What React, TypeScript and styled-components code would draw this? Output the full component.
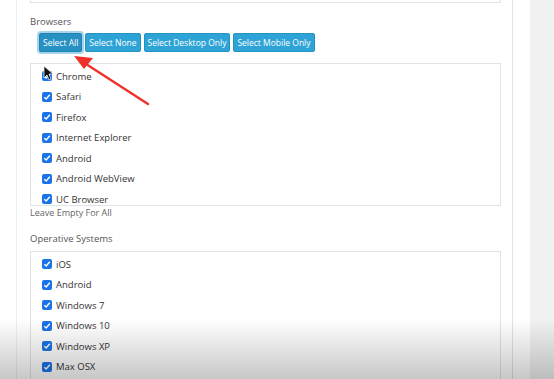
import React from 'react';
import styled, { createGlobalStyle } from 'styled-components';

const GlobalStyle = createGlobalStyle`
  html, body {
    margin: 0;
    padding: 0;
    background: #ffffff;
  }
  body {
    font-family: "Open Sans", "Liberation Sans", sans-serif;
  }
`;

const Page = styled.div`
  position: relative;
  display: flex;
  width: 554px;
  height: 379px;
  overflow: hidden;
  background: #ffffff;
`;

const Panel = styled.div`
  margin-left: 16px;
  width: 471px;
  padding: 0 11px 0 13px;
  border-left: 1px solid #eceff1;
  border-right: 1px solid #dde3e7;
  flex-shrink: 0;
`;

const Gutter = styled.div`
  width: 17px;
  flex-shrink: 0;
`;

const Backdrop = styled.div`
  flex: 1;
  background: #f1f1f1;
`;

const PrevBoxTail = styled.div`
  height: 2px;
  border: 1px solid #dde3e7;
  border-top: none;
`;

const Label = styled.div`
  font-size: 9.5px;
  color: #555;
  line-height: 14px;
  margin-top: 12px;
`;

const ButtonRow = styled.div`
  display: flex;
  gap: 3px;
  margin: 4px 0 0 9px;
`;

const Btn = styled.button<{ $active?: boolean }>`
  height: 19px;
  padding: 0 3px;
  border: 1px solid ${p => (p.$active ? '#1f84b3' : '#2592c4')};
  border-radius: 2px;
  background: ${p => (p.$active ? '#2791c2' : '#2ea3d6')};
  color: #ffffff;
  font-family: "Open Sans", "Liberation Sans", sans-serif;
  font-size: 8.5px;
  line-height: 17px;
  white-space: nowrap;
  box-shadow: ${p => (p.$active ? '0 0 0 2px rgba(60,160,210,0.45)' : 'none')};
  cursor: pointer;
`;

const ListBox = styled.div<{ $first?: boolean }>`
  margin-top: ${p => (p.$first ? 11 : 0)}px;
  height: ${p => (p.$first ? 143 : 140)}px;
  border: 1px solid #dde3e7;
  padding: 2px 0 0 11px;
  overflow: hidden;
  box-sizing: border-box;
`;

const Row = styled.div`
  display: flex;
  align-items: center;
  height: 20.5px;
  gap: 4px;
`;

const Box = styled.span`
  width: 10px;
  height: 10px;
  border-radius: 2px;
  background: #1a73e8;
  display: flex;
  align-items: center;
  justify-content: center;
  flex-shrink: 0;
`;

const ItemText = styled.span`
  font-size: 9.5px;
  color: #333;
`;

const Hint = styled.div`
  font-size: 9px;
  color: #666;
  line-height: 14px;
  margin-top: 0;
`;

const SectionLabel = styled(Label)`
  margin-top: 12px;
  margin-bottom: 5px;
`;

const Overlay = styled.svg`
  position: absolute;
  left: 0;
  top: 0;
  pointer-events: none;
`;

const Shade = styled.div`
  position: absolute;
  left: 0;
  right: 0;
  bottom: 0;
  height: 60px;
  background: linear-gradient(to bottom, rgba(0,0,0,0), rgba(0,0,0,0.22));
  pointer-events: none;
`;

const browsers = ['Chrome', 'Safari', 'Firefox', 'Internet Explorer', 'Android', 'Android WebView', 'UC Browser'];
const systems = ['iOS', 'Android', 'Windows 7', 'Windows 10', 'Windows XP', 'Max OSX'];

function Check() {
  return (
    <Box>
      <svg width="8" height="8" viewBox="0 0 8 8">
        <path d="M1.3 4.2 L3.2 6 L6.8 1.8" fill="none" stroke="#fff" strokeWidth="1.4" />
      </svg>
    </Box>
  );
}

function CheckList({ items, first }: { items: string[]; first?: boolean }) {
  return (
    <ListBox $first={first}>
      {items.map(name => (
        <Row key={name}>
          <Check />
          <ItemText>{name}</ItemText>
        </Row>
      ))}
    </ListBox>
  );
}

export default function App() {
  return (
    <Page>
      <GlobalStyle />
      <Panel>
        <PrevBoxTail />
        <Label>Browsers</Label>
        <ButtonRow>
          <Btn $active>Select All</Btn>
          <Btn>Select None</Btn>
          <Btn>Select Desktop Only</Btn>
          <Btn>Select Mobile Only</Btn>
        </ButtonRow>
        <CheckList items={browsers} first />
        <Hint>Leave Empty For All</Hint>
        <SectionLabel>Operative Systems</SectionLabel>
        <CheckList items={systems} />
      </Panel>
      <Gutter />
      <Backdrop />
      <Shade />
      <Overlay width="554" height="379">
        <path d="M148 104 L86 64" stroke="#f0312b" strokeWidth="2.4" strokeLinecap="round" />
        <polygon points="74,56 93,58 84,69" fill="#f0312b" />
        <path d="M44 66 L44 78 L47 75 L49 80 L51 79 L49 74 L53 74 Z" fill="#111" stroke="#fff" strokeWidth="0.7" />
      </Overlay>
    </Page>
  );
}
